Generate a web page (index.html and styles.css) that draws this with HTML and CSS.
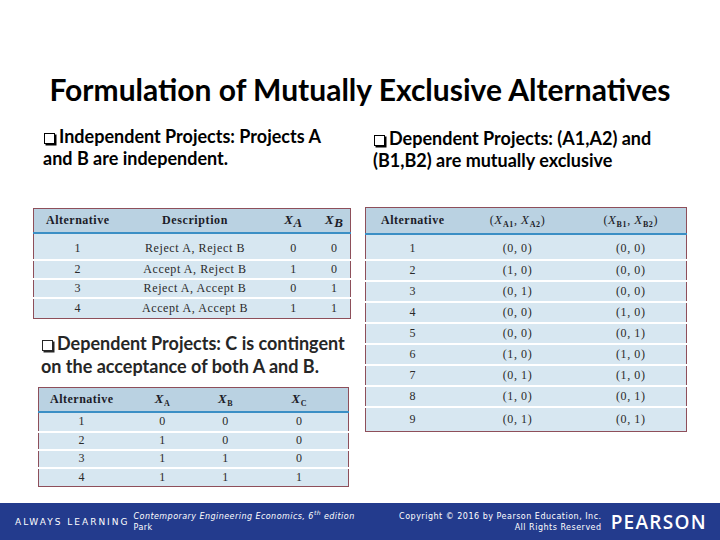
FILE: index.html
```html
<!DOCTYPE html>
<html>
<head>
<meta charset="utf-8">
<link rel="stylesheet" href="styles.css">
</head>
<body>
<div class="slide">
  <h1 class="title">Formulation of Mutually Exclusive Alternatives</h1>
  <div class="content">
    <div class="col left">
      <p class="bullet b1"><span class="box"></span>Independent Projects: Projects A and B are independent.</p>
      <table class="t t1">
        <colgroup><col style="width:88px"><col style="width:147px"><col style="width:50px"><col style="width:32px"></colgroup>
        <tr><th>Alternative</th><th>Description</th><th><i>X</i><sub><i>A</i></sub></th><th><i>X</i><sub><i>B</i></sub></th></tr>
        <tr class="first"><td>1</td><td>Reject A, Reject B</td><td>0</td><td>0</td></tr>
        <tr><td>2</td><td>Accept A, Reject B</td><td>1</td><td>0</td></tr>
        <tr><td>3</td><td>Reject A, Accept B</td><td>0</td><td>1</td></tr>
        <tr class="last"><td>4</td><td>Accept A, Accept B</td><td>1</td><td>1</td></tr>
      </table>
      <p class="bullet b3"><span class="box"></span>Dependent Projects: C is contingent on the acceptance of both A and B.</p>
      <table class="t t3">
        <colgroup><col style="width:86px"><col style="width:76px"><col style="width:50px"><col style="width:98px"></colgroup>
        <tr><th>Alternative</th><th><i>X</i><sub>A</sub></th><th><i>X</i><sub>B</sub></th><th><i>X</i><sub>C</sub></th></tr>
        <tr class="first"><td>1</td><td>0</td><td>0</td><td>0</td></tr>
        <tr><td>2</td><td>1</td><td>0</td><td>0</td></tr>
        <tr><td>3</td><td>1</td><td>1</td><td>0</td></tr>
        <tr class="last"><td>4</td><td>1</td><td>1</td><td>1</td></tr>
      </table>
    </div>
    <div class="col right">
      <p class="bullet b2"><span class="box"></span>Dependent Projects: (A1,A2) and (B1,B2) are mutually exclusive</p>
      <table class="t t2">
        <colgroup><col style="width:94px"><col style="width:116px"><col style="width:111px"></colgroup>
        <tr><th>Alternative</th><th>(<i>X</i><sub>A1</sub>, <i>X</i><sub>A2</sub>)</th><th>(<i>X</i><sub>B1</sub>, <i>X</i><sub>B2</sub>)</th></tr>
        <tr class="first"><td>1</td><td>(0, 0)</td><td>(0, 0)</td></tr>
        <tr><td>2</td><td>(1, 0)</td><td>(0, 0)</td></tr>
        <tr><td>3</td><td>(0, 1)</td><td>(0, 0)</td></tr>
        <tr><td>4</td><td>(0, 0)</td><td>(1, 0)</td></tr>
        <tr><td>5</td><td>(0, 0)</td><td>(0, 1)</td></tr>
        <tr><td>6</td><td>(1, 0)</td><td>(1, 0)</td></tr>
        <tr><td>7</td><td>(0, 1)</td><td>(1, 0)</td></tr>
        <tr><td>8</td><td>(1, 0)</td><td>(0, 1)</td></tr>
        <tr class="last"><td>9</td><td>(0, 1)</td><td>(0, 1)</td></tr>
      </table>
    </div>
  </div>
  <footer class="footer">
    <div class="always">ALWAYS LEARNING</div>
    <div class="book"><i>Contemporary Engineering Economics, 6<sup>th</sup> edition</i><br>Park</div>
    <div class="spacer"></div>
    <div class="copy">Copyright © 2016 by Pearson Education, Inc.<br>All Rights Reserved</div>
    <div class="pearson">PEARSON</div>
  </footer>
</div>
</body>
</html>
```
FILE: styles.css
```css
* { box-sizing: border-box; }
html, body { margin: 0; padding: 0; background: #fff; }
.slide {
  width: 720px;
  height: 540px;
  display: flex;
  flex-direction: column;
  overflow: hidden;
  font-family: Lato, "Open Sans", sans-serif;
  color: #000;
}
.title {
  margin: 72px 0 0 0;
  font-size: 30px;
  line-height: 34px;
  font-weight: 700;
  text-align: center;
  white-space: nowrap;
}
.content {
  flex: 1;
  display: flex;
  padding-left: 33px;
  gap: 15px;
}
.col { display: flex; flex-direction: column; align-items: flex-start; }
.left { width: 317px; }
.right { width: 321px; }
.bullet {
  margin: 0;
  font-size: 18px;
  line-height: 22px;
  font-weight: 700;
}
.box {
  display: inline-block;
  width: 11px;
  height: 11px;
  border: 1.5px solid currentColor;
  box-shadow: 1.5px 1.5px 0 currentColor;
  margin: 0 4px 0 1px;
  vertical-align: -1px;
}
.b1 { margin: 19px 0 0 10px; width: 292px; }
.b2 { margin: 21px 0 0 8px; width: 306px; }
.b3 { margin: 13px 0 0 8px; width: 322px; flex-shrink: 0; color: #262626; line-height: 23px; }

.t {
  border-collapse: collapse;
  table-layout: fixed;
  border: 1px solid #8e4f5a;
  font-family: "Liberation Serif", "Times New Roman", serif;
  font-size: 12px;
  letter-spacing: 0.6px;
  color: #2a2a2a;
  flex-shrink: 0;
}
.t th {
  background: #bad2e2;
  border-bottom: 2px solid #3b8fc5;
  font-weight: 700;
  color: #1c1c28;
  padding: 0;
  text-align: center;
  vertical-align: middle;
}
.t td {
  background: #d7e7f1;
  border-top: 2px solid #fff;
  padding: 0;
  text-align: center;
  vertical-align: middle;
}
.t tr.first td { border-top: none; }
.t sub { font-size: 9px; vertical-align: -3px; line-height: 0; }
.t th:first-child { letter-spacing: 0.5px; }

.t1 { width: 317px; margin-top: 39px; }
.t1 th { height: 24px; font-size: 12px; }
.t1 th i { font-size: 13px; }
.t1 tr.first td { height: 27px; padding-top: 4px; }
.t1 td { height: 19px; }
.t1 tr.last td { height: 21px; }

.t3 { width: 310px; margin: 9px 0 0 5px; }
.t3 th { height: 24px; }
.t3 th i { font-size: 13px; }
.t3 sub { font-weight: 700; font-size: 8px; }
.t3 tr.first td { height: 20px; }
.t3 td { height: 18px; }
.t3 tr.last td { height: 19px; }

.t2 { width: 321px; margin-top: 36px; }
.t2 th { height: 26px; }
.t2 th i { font-size: 13px; }
.t2 sub { font-weight: 700; font-size: 8px; }
.t2 th:nth-child(n+2) { font-weight: 400; }
.t2 tr.first td { height: 26px; padding-top: 3px; }
.t2 td { height: 21px; }
.t2 tr.last td { height: 25px; }

.footer {
  height: 37px;
  background: #233b8d;
  color: #fff;
  display: flex;
  align-items: center;
  padding: 0 13px 0 15px;
  font-family: "DejaVu Sans", sans-serif;
}
.always {
  font-size: 9px;
  letter-spacing: 2px;
  font-weight: 400;
  margin-right: 4px;
}
.book {
  font-size: 8px;
  line-height: 11px;
  letter-spacing: 0.45px;
  margin-top: 1px;
}
.book sup { font-size: 6px; line-height: 0; }
.spacer { flex: 1; }
.copy {
  font-size: 8px;
  line-height: 11px;
  letter-spacing: 0.5px;
  text-align: right;
  margin-top: 1px;
}
.pearson {
  font-family: "Open Sans", sans-serif;
  font-weight: 600;
  font-size: 19px;
  letter-spacing: 1.3px;
  margin-left: 9px;
}
```
